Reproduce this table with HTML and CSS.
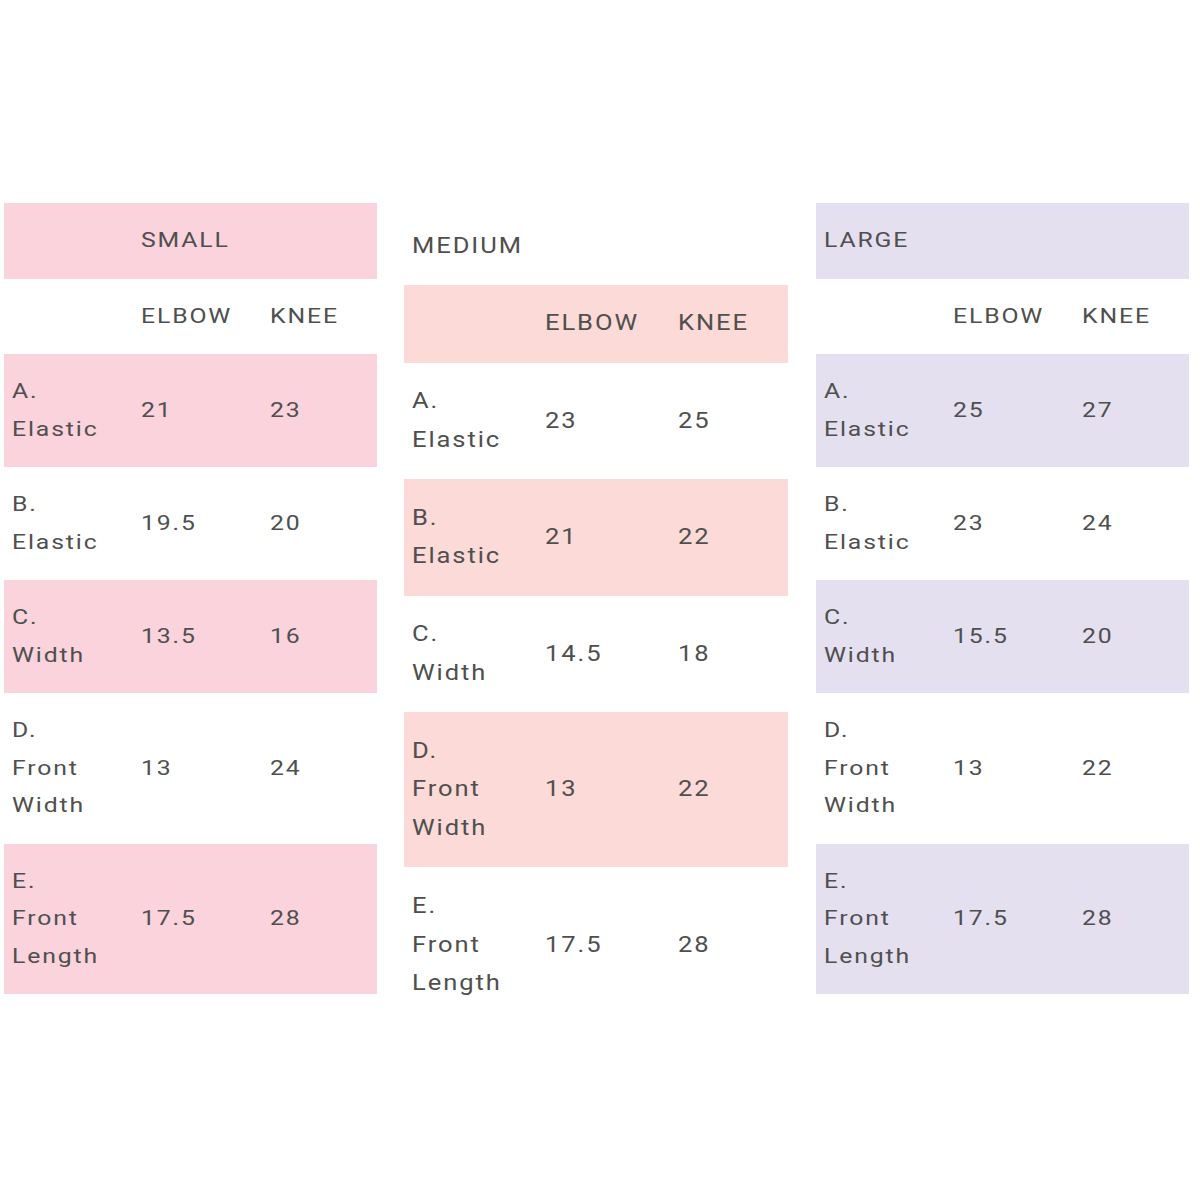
FILE: index.html
```html
<!DOCTYPE html>
<html lang="en">
<head>
<meta charset="utf-8">
<title>Size chart</title>
<link rel="stylesheet" href="styles.css">
</head>
<body>
<main class="charts">
  <section class="size size-small">
    <div class="row title tint"><div class="cell"></div><div class="cell"><span class="t">SMALL</span></div><div class="cell"></div></div>
    <div class="row"><div class="cell"></div><div class="cell"><span class="t">ELBOW</span></div><div class="cell"><span class="t">KNEE</span></div></div>
    <div class="row tint"><div class="cell"><span class="t">A.<br>Elastic</span></div><div class="cell"><span class="t">21</span></div><div class="cell"><span class="t">23</span></div></div>
    <div class="row"><div class="cell"><span class="t">B.<br>Elastic</span></div><div class="cell"><span class="t">19.5</span></div><div class="cell"><span class="t">20</span></div></div>
    <div class="row tint"><div class="cell"><span class="t">C.<br>Width</span></div><div class="cell"><span class="t">13.5</span></div><div class="cell"><span class="t">16</span></div></div>
    <div class="row"><div class="cell"><span class="t">D.<br>Front<br>Width</span></div><div class="cell"><span class="t">13</span></div><div class="cell"><span class="t">24</span></div></div>
    <div class="row tint"><div class="cell"><span class="t">E.<br>Front<br>Length</span></div><div class="cell"><span class="t">17.5</span></div><div class="cell"><span class="t">28</span></div></div>
  </section>

  <section class="size size-medium">
    <div class="row title"><div class="cell"><span class="t">MEDIUM</span></div><div class="cell"></div><div class="cell"></div></div>
    <div class="row tint"><div class="cell"></div><div class="cell"><span class="t">ELBOW</span></div><div class="cell"><span class="t">KNEE</span></div></div>
    <div class="row"><div class="cell"><span class="t">A.<br>Elastic</span></div><div class="cell"><span class="t">23</span></div><div class="cell"><span class="t">25</span></div></div>
    <div class="row tint"><div class="cell"><span class="t">B.<br>Elastic</span></div><div class="cell"><span class="t">21</span></div><div class="cell"><span class="t">22</span></div></div>
    <div class="row"><div class="cell"><span class="t">C.<br>Width</span></div><div class="cell"><span class="t">14.5</span></div><div class="cell"><span class="t">18</span></div></div>
    <div class="row tint"><div class="cell"><span class="t">D.<br>Front<br>Width</span></div><div class="cell"><span class="t">13</span></div><div class="cell"><span class="t">22</span></div></div>
    <div class="row"><div class="cell"><span class="t">E.<br>Front<br>Length</span></div><div class="cell"><span class="t">17.5</span></div><div class="cell"><span class="t">28</span></div></div>
  </section>

  <section class="size size-large">
    <div class="row title tint"><div class="cell"><span class="t">LARGE</span></div><div class="cell"></div><div class="cell"></div></div>
    <div class="row"><div class="cell"></div><div class="cell"><span class="t">ELBOW</span></div><div class="cell"><span class="t">KNEE</span></div></div>
    <div class="row tint"><div class="cell"><span class="t">A.<br>Elastic</span></div><div class="cell"><span class="t">25</span></div><div class="cell"><span class="t">27</span></div></div>
    <div class="row"><div class="cell"><span class="t">B.<br>Elastic</span></div><div class="cell"><span class="t">23</span></div><div class="cell"><span class="t">24</span></div></div>
    <div class="row tint"><div class="cell"><span class="t">C.<br>Width</span></div><div class="cell"><span class="t">15.5</span></div><div class="cell"><span class="t">20</span></div></div>
    <div class="row"><div class="cell"><span class="t">D.<br>Front<br>Width</span></div><div class="cell"><span class="t">13</span></div><div class="cell"><span class="t">22</span></div></div>
    <div class="row tint"><div class="cell"><span class="t">E.<br>Front<br>Length</span></div><div class="cell"><span class="t">17.5</span></div><div class="cell"><span class="t">28</span></div></div>
  </section>
</main>
</body>
</html>
```
FILE: styles.css
```css
html, body {
  margin: 0;
  padding: 0;
  background: #ffffff;
}

body {
  font-family: Roboto, "Liberation Sans", sans-serif;
  color: #4f4f4f;
}

.charts {
  display: flex;
  align-items: flex-start;
  padding: 203px 0 0 4px;
}

.size {
  font-size: 21px;
  width: 17.76em;
}

.size-medium {
  font-size: 21.65px;
  margin: 4px 0 0 27px;
}

.size-large {
  margin-left: 28px;
}

.row {
  display: grid;
  grid-template-columns: 6.143em 6.143em 1fr;
  align-items: center;
  padding: 0.905em 0;
  line-height: 1.786em;
}

.cell {
  padding-left: 0.381em;
  white-space: nowrap;
}

.t {
  display: inline-block;
  letter-spacing: 0.075em;
  transform: scaleX(1.18);
  transform-origin: left center;
}

.size-small .tint { background: #fad3dc; }
.size-medium .tint { background: #fbdad7; }
.size-large .tint { background: #e4e0f0; }
```
